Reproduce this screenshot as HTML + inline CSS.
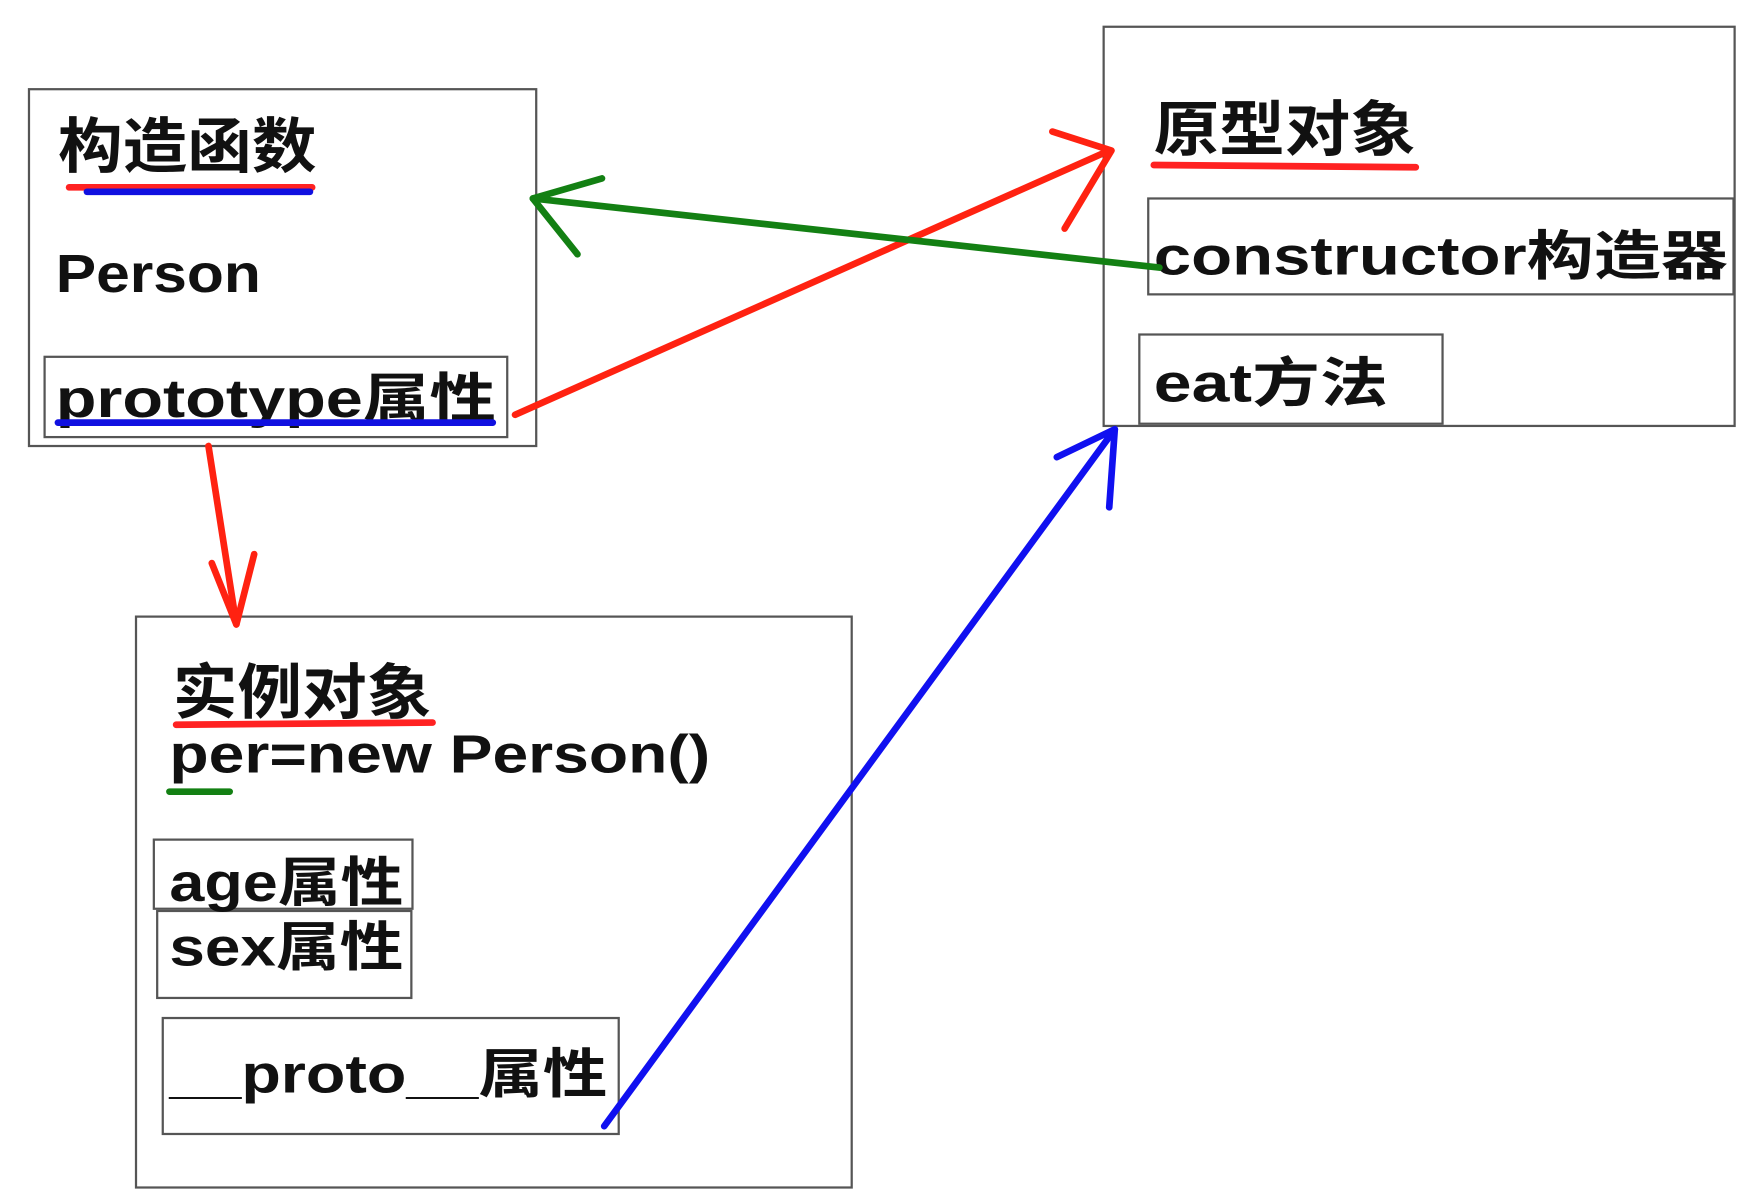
<!DOCTYPE html>
<html><head><meta charset="utf-8"><style>
html,body{margin:0;padding:0;background:#fff;width:1748px;height:1202px;overflow:hidden}
svg{display:block}
text{font-family:"Liberation Sans","Noto Sans CJK SC",sans-serif;font-weight:bold;fill:#111}
</style></head><body>
<svg width="1748" height="1202" viewBox="0 0 1568 1078" preserveAspectRatio="none">
<g fill="none" stroke="#555" stroke-width="2">
<rect x="26" y="80" width="455" height="320"/>
<rect x="40" y="320" width="415" height="72"/>
<rect x="990" y="24" width="566" height="358"/>
<rect x="1030" y="178" width="525" height="86"/>
<rect x="1022" y="300" width="272" height="80"/>
<rect x="122" y="553" width="642" height="512"/>
<rect x="138" y="753" width="232" height="62"/>
<rect x="141" y="817" width="228" height="78"/>
<rect x="146" y="913" width="409" height="104"/>
</g>
<text x="52" y="150" font-size="54" textLength="232" lengthAdjust="spacingAndGlyphs">构造函数</text>
<text x="50" y="262" font-size="48" textLength="184" lengthAdjust="spacingAndGlyphs">Person</text>
<text x="50" y="374" font-size="48" textLength="395" lengthAdjust="spacingAndGlyphs">prototype属性</text>
<text x="1035" y="135" font-size="54" textLength="235" lengthAdjust="spacingAndGlyphs">原型对象</text>
<text x="1035" y="246" font-size="48" textLength="515" lengthAdjust="spacingAndGlyphs">constructor构造器</text>
<text x="1035" y="360" font-size="48" textLength="210" lengthAdjust="spacingAndGlyphs">eat方法</text>
<text x="155" y="640" font-size="54" textLength="232" lengthAdjust="spacingAndGlyphs">实例对象</text>
<text x="152" y="693" font-size="48" textLength="485" lengthAdjust="spacingAndGlyphs">per=new Person()</text>
<text x="152" y="808" font-size="48" textLength="210" lengthAdjust="spacingAndGlyphs">age属性</text>
<text x="152" y="866" font-size="48" textLength="210" lengthAdjust="spacingAndGlyphs">sex属性</text>
<text x="152" y="980" font-size="48" textLength="393" lengthAdjust="spacingAndGlyphs">__proto__属性</text>
<g fill="none" stroke-linecap="round" stroke-linejoin="round" stroke-width="6">
<line x1="62" y1="168" x2="280" y2="168" stroke="#f22"/>
<line x1="78" y1="172" x2="278" y2="172" stroke="#1010e0"/>
<line x1="52" y1="379" x2="442" y2="379" stroke="#1010e0"/>
<line x1="1035" y1="148" x2="1270" y2="150" stroke="#f22"/>
<line x1="158" y1="650" x2="388" y2="648" stroke="#f22"/>
<line x1="152" y1="710" x2="206" y2="710" stroke="#138013"/>
<path d="M462 372 L995 135" stroke="#f21"/>
<path d="M944 118 L997 135 L955 205" stroke="#f21"/>
<path d="M1040 240 L478 178" stroke="#138013"/>
<path d="M540 160 L478 178 L518 228" stroke="#138013"/>
<path d="M187 400 L212 560" stroke="#f21"/>
<path d="M190 505 L212 560 L228 497" stroke="#f21"/>
<path d="M542 1010 L1000 385" stroke="#1010f0"/>
<path d="M948 410 L1000 385 L995 455" stroke="#1010f0"/>
</g>
</svg>
</body></html>
